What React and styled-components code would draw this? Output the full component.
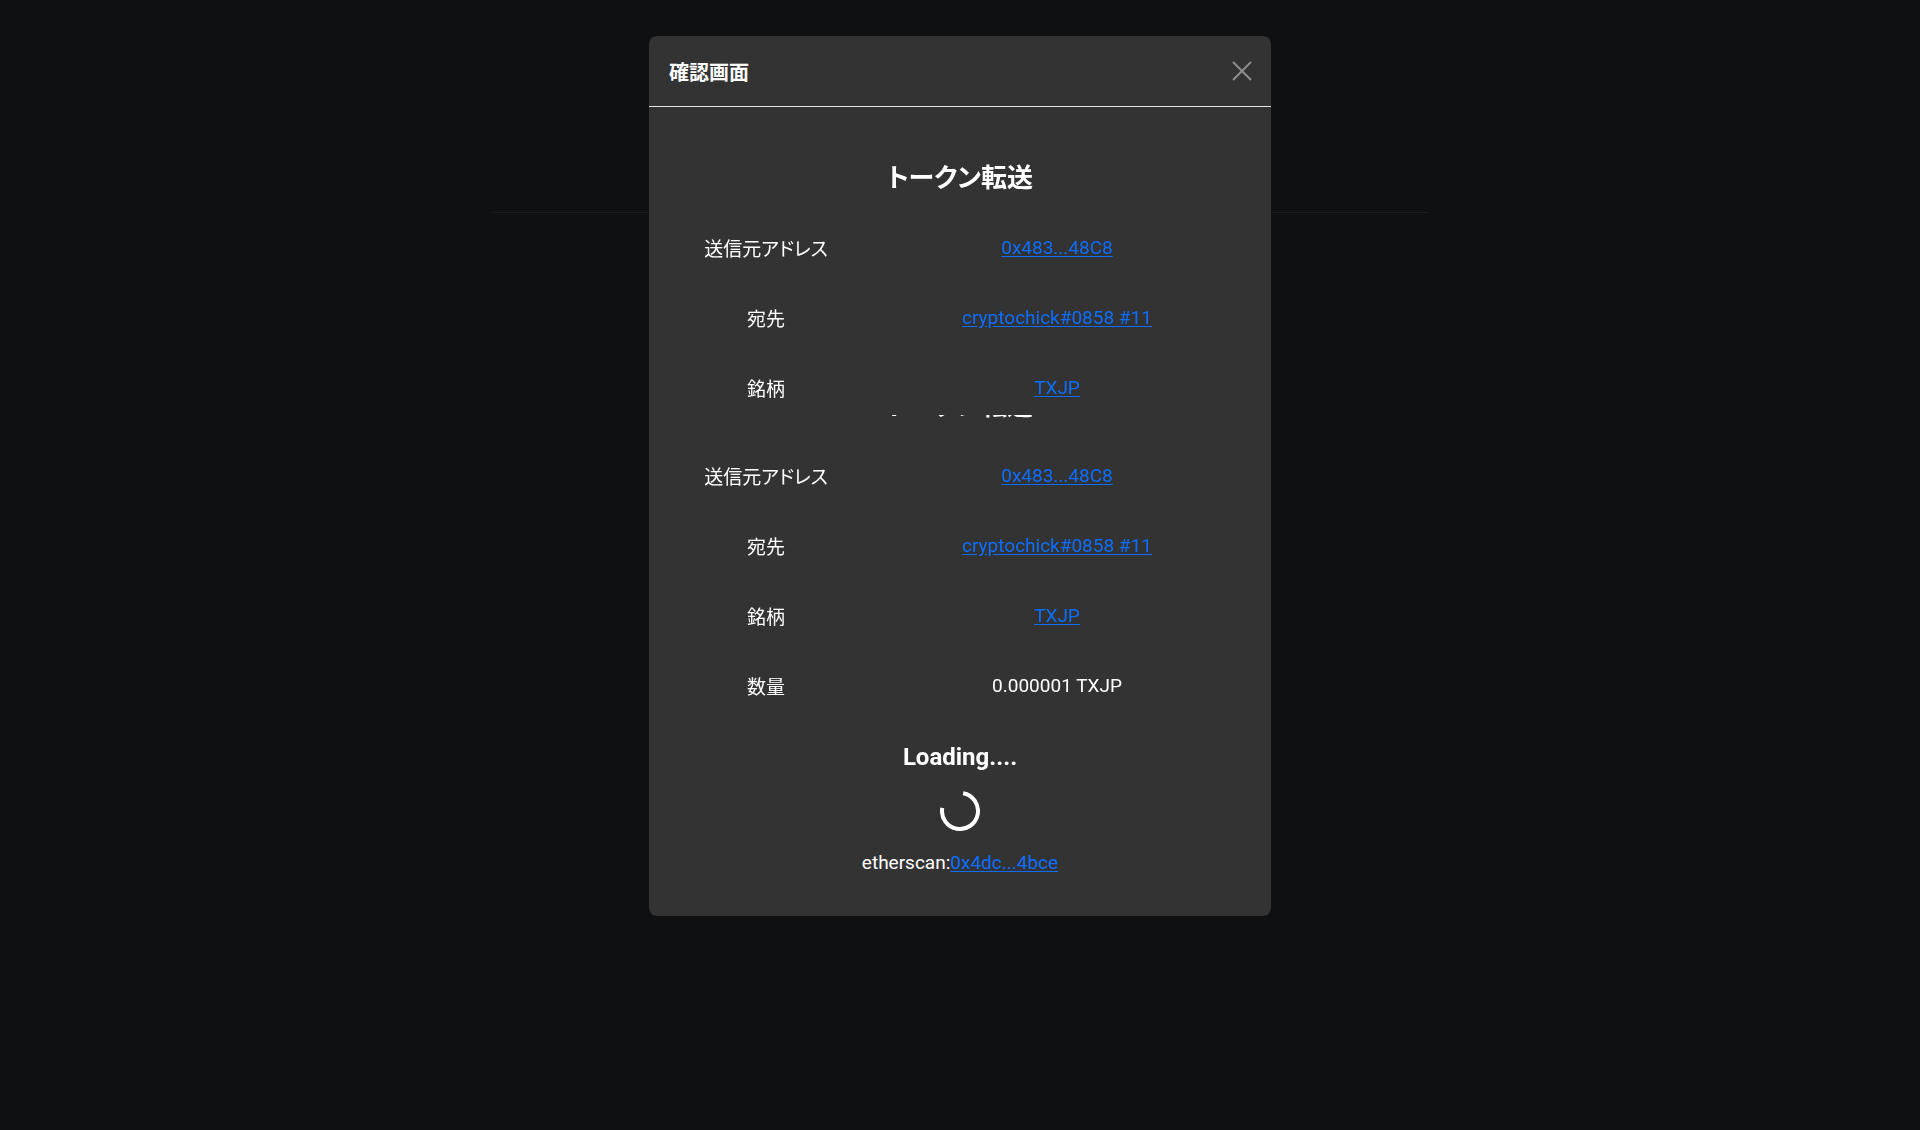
import React from "react";
import styled, { createGlobalStyle } from "styled-components";

const GlobalStyle = createGlobalStyle`
  html, body {
    margin: 0;
    padding: 0;
    background: #0f1012;
    font-family: Roboto, "Noto Sans CJK JP", sans-serif;
    color: #fff;
  }
`;

const Page = styled.div`
  min-height: 1130px;
  padding-top: 212px;
  box-sizing: border-box;
`;
const Rule = styled.div`
  width: 935px;
  height: 1px;
  margin: 0 auto;
  background: #1c1d20;
`;

const Overlay = styled.div`
  position: fixed;
  inset: 0;
  display: flex;
  justify-content: center;
  align-items: flex-start;
  padding-top: 36px;
`;
const Modal = styled.div`
  width: 622px;
  background: #333333;
  border-radius: 8px;
  overflow: hidden;
  font-feature-settings: "palt";
`;
const Header = styled.div`
  height: 70px;
  display: flex;
  align-items: center;
  justify-content: space-between;
  padding: 0 19px 0 20px;
  border-bottom: 1px solid #e6e6e6;
`;
const Title = styled.div`
  font-size: 20px;
  font-weight: 700;
  color: #fff;
`;
const CloseButton = styled.button`
  width: 20px;
  height: 22px;
  padding: 0;
  border: none;
  background: none;
  display: flex;
  align-items: center;
  justify-content: center;
  cursor: pointer;
`;

const Window = styled.div`
  overflow: hidden;
  height: ${({ $height }) => ($height ? `${$height}px` : "auto")};
`;
const Content = styled.div`
  padding: 51px 0 38px;
  margin-top: ${({ $shift }) => $shift || 0}px;
  display: flex;
  flex-direction: column;
  align-items: center;
`;
const Heading = styled.div`
  height: 40px;
  line-height: 40px;
  font-size: 26px;
  font-weight: 700;
  margin-bottom: 14px;
`;
const Row = styled.div`
  align-self: stretch;
  height: 70px;
  display: grid;
  grid-template-columns: 202px 1fr;
  align-items: center;
  padding: 0 24px 0 16px;
  font-size: 19px;
`;
const Cell = styled.div`
  text-align: center;
  white-space: nowrap;
`;
const Link = styled.a`
  color: #0d6efd;
  text-decoration: underline;
  text-underline-offset: 2px;
`;
const Loading = styled.div`
  margin-top: 17px;
  height: 40px;
  line-height: 40px;
  font-size: 24px;
  font-weight: 700;
`;
const Spinner = styled.svg`
  margin-top: 14px;
  display: block;
`;
const Scan = styled.div`
  margin-top: 17px;
  height: 30px;
  line-height: 30px;
  font-size: 19px;
`;

const rows = [
  { label: "送信元アドレス", value: "0x483...48C8", link: true },
  { label: "宛先", value: "cryptochick#0858 #11", link: true },
  { label: "銘柄", value: "TXJP", link: true },
  { label: "数量", value: "0.000001 TXJP" },
];

function Body({ shift }) {
  return (
    <Content $shift={shift}>
      <Heading>トークン転送</Heading>
      {rows.map((r) => (
        <Row key={r.label}>
          <Cell>{r.label}</Cell>
          <Cell>{r.link ? <Link href="#">{r.value}</Link> : r.value}</Cell>
        </Row>
      ))}
      <Loading>Loading....</Loading>
      <Spinner width="40" height="40" viewBox="0 0 40 40">
        <path
          d="M23.13 2.27 A18 18 0 1 1 2.27 16.87"
          fill="none"
          stroke="#fff"
          strokeWidth="4"
        />
      </Spinner>
      <Scan>
        etherscan:<Link href="#">0x4dc...4bce</Link>
      </Scan>
    </Content>
  );
}

export default function App() {
  return (
    <>
      <GlobalStyle />
      <Page>
        <Rule />
      </Page>
      <Overlay>
        <Modal>
          <Header>
            <Title>確認画面</Title>
            <CloseButton aria-label="close">
              <svg width="20" height="20" viewBox="0 0 20 20">
                <path d="M1 1 L19 19 M19 1 L1 19" stroke="#8d8d8d" strokeWidth="2" />
              </svg>
            </CloseButton>
          </Header>
          <Window $height={308}>
            <Body />
          </Window>
          <Window>
            <Body shift={-80} />
          </Window>
        </Modal>
      </Overlay>
    </>
  );
}
